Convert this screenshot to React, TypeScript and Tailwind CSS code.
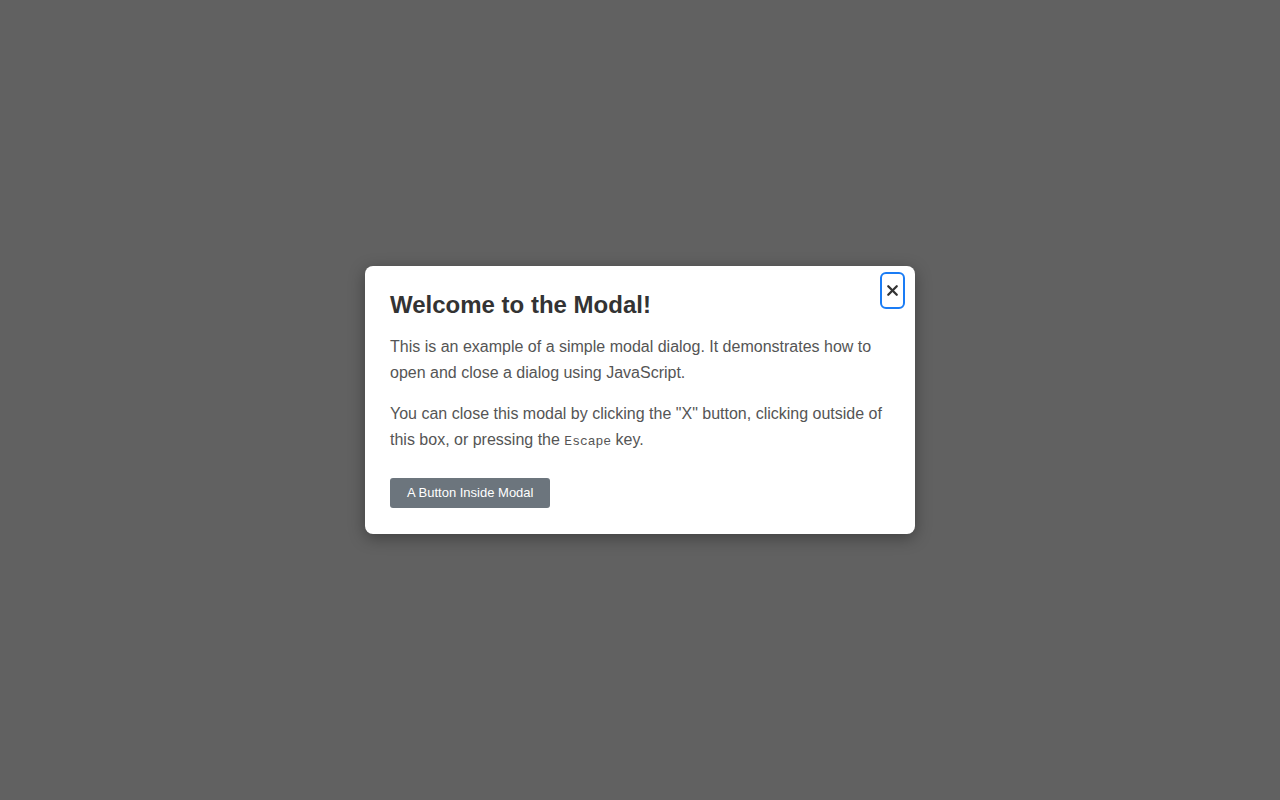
import { X } from 'lucide-react'

export default function App() {
  return (
    <div className="min-h-screen w-full bg-[#616161] flex items-center justify-center font-['Liberation_Sans',Arial,sans-serif]">
      <div className="relative w-[550px] bg-white rounded-lg shadow-[0_4px_16px_rgba(0,0,0,0.35)] px-[25px] pt-[24px] pb-[26px]">
        <button className="absolute top-[6px] right-[10px] w-[25px] h-[37px] flex items-center justify-center rounded-md border-2 border-[#1a7cf5] text-[#333]">
          <X className="w-[17px] h-[17px]" strokeWidth={3.2} />
        </button>
        <h2 className="text-[24px] leading-[29px] font-bold text-[#333] mb-[15px]">Welcome to the Modal!</h2>
        <p className="text-[16px] leading-[26px] text-[#555] mb-[15px]">
          This is an example of a simple modal dialog. It demonstrates how to open and close a dialog using JavaScript.
        </p>
        <p className="text-[16px] leading-[26px] text-[#555] mb-[25px]">
          You can close this modal by clicking the "X" button, clicking outside of this box, or pressing the{' '}
          <code className="font-['Liberation_Mono','Courier_New',monospace] text-[13px] leading-none">Escape</code> key.
        </p>
        <button className="h-[30px] px-[17px] bg-[#6c757d] text-white text-[13px] rounded-[3px]">A Button Inside Modal</button>
      </div>
    </div>
  )
}
